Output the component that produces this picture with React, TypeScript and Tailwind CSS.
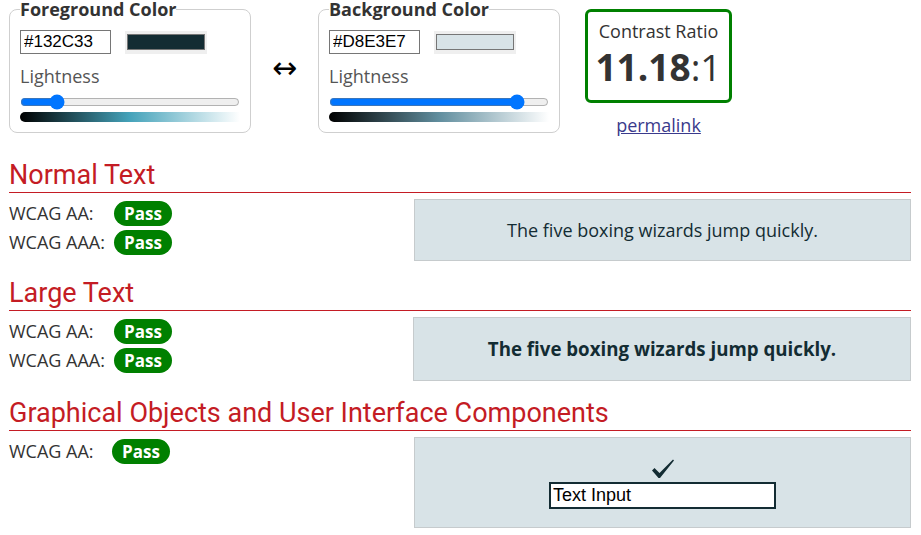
const body = "font-['Open_Sans',sans-serif]"

function Swatch({ color }: { color: string }) {
  return (
    <div className="w-[82px] h-[23px] bg-[#efefef] flex items-center justify-center">
      <div className="w-[78px] h-[16px] border border-[#767676]" style={{ background: color }} />
    </div>
  )
}

function ColorPicker({
  title,
  hex,
  value,
  gradient,
}: {
  title: string
  hex: string
  value: number
  gradient: string
}) {
  return (
    <fieldset className="w-[242px] border border-[#cfcfcf] rounded-[8px] px-[10px] pt-[12px] pb-[10px]">
      <legend className="text-[18px] font-bold text-[#333] leading-[18px] p-0">{title}</legend>
      <div className="flex items-center gap-[14px]">
        <input
          readOnly
          value={hex}
          className="w-[91px] h-[24px] border border-[#767676] px-[3px] text-[17px] text-black font-['Liberation_Sans',Arial,sans-serif] leading-none outline-none"
        />
        <Swatch color={hex} />
      </div>
      <div className="text-[18px] text-[#555] mt-[10px] leading-[24px]">Lightness</div>
      <input
        type="range"
        min={0}
        max={100}
        defaultValue={value}
        className="block w-[220px] h-[16px] mt-[6px] m-0 accent-[#0075ff]"
      />
      <div className="w-[220px] h-[10px] mt-[2px] rounded-l-[5px]" style={{ background: gradient }} />
    </fieldset>
  )
}

function Pass() {
  return (
    <span className="inline-flex items-center justify-center w-[58px] h-[25px] rounded-full bg-[#008000] text-white font-bold text-[17px] leading-none">
      Pass
    </span>
  )
}

function Heading({ children }: { children: string }) {
  return (
    <h2 className="h-[33px] flex items-end pb-[1px] border-b border-solid border-b-[#c41c24] text-[27px] leading-[32px] text-[#c41c24] font-['Roboto',sans-serif]">
      {children}
    </h2>
  )
}

function Row({ label, w }: { label: string; w: string }) {
  return (
    <div className="flex items-center h-[29px]">
      <span className={`${w} text-[18px] text-[#333]`}>{label}</span>
      <Pass />
    </div>
  )
}

function Check() {
  return (
    <svg width="24" height="22" viewBox="0 0 24 22" className="block">
      <path d="M1 12.5 L3.5 10 L8.5 15 L22 1.5 L23 2.5 L9 20 L7.5 20 Z" fill="#132C33" />
    </svg>
  )
}

export default function App() {
  return (
    <div className={`${body} w-[921px] h-[535px] bg-white pl-[9px] pr-[10px] text-[#333] overflow-hidden`}>
      <div className="flex items-start h-[160px]">
        <ColorPicker
          title="Foreground Color"
          hex="#132C33"
          value={14}
          gradient="linear-gradient(to right, hsl(192 46% 0%), hsl(192 46% 25%), hsl(192 46% 50%), hsl(192 46% 75%), hsl(192 46% 100%))"
        />
        <div className="w-[67px] h-[124px] flex items-center justify-center text-[30px] text-black pt-[10px] font-['DejaVu_Sans',sans-serif]">
          ↔
        </div>
        <ColorPicker
          title="Background Color"
          hex="#D8E3E7"
          value={88}
          gradient="linear-gradient(to right, hsl(196 24% 0%), hsl(196 24% 25%), hsl(196 24% 50%), hsl(196 24% 75%), hsl(196 24% 100%))"
        />
        <div className="ml-[25px] mt-[9px] flex flex-col items-center">
          <div className="w-[147px] h-[94px] border-[3px] border-[#008000] rounded-[6px] flex flex-col items-center pt-[7px]">
            <div className="text-[18px] leading-[24px] text-[#333]">Contrast Ratio</div>
            <div className="text-[37px] leading-[44px] text-[#333] mt-[2px]">
              <span className="font-bold">11.18</span>:1
            </div>
          </div>
          <a className="mt-[10px] text-[18px] leading-[24px] text-[#3a3a8c] underline">permalink</a>
        </div>
      </div>

      <div>
        <Heading>Normal Text</Heading>
        <div className="flex mt-[6px]">
          <div className="w-[405px]">
            <Row label="WCAG AA:" w="w-[105px]" />
            <Row label="WCAG AAA:" w="w-[105px]" />
          </div>
          <div className="flex-1 h-[62px] bg-[#D8E3E7] border border-[#c6cbcd] flex items-center justify-center text-[18px] text-[#132C33]">
            The five boxing wizards jump quickly.
          </div>
        </div>
      </div>

      <div className="mt-[17px]">
        <Heading>Large Text</Heading>
        <div className="flex mt-[6px]">
          <div className="w-[404px]">
            <Row label="WCAG AA:" w="w-[105px]" />
            <Row label="WCAG AAA:" w="w-[105px]" />
          </div>
          <div className="flex-1 h-[64px] bg-[#D8E3E7] border border-[#c6cbcd] flex items-center justify-center text-[18.7px] font-bold text-[#132C33]">
            The five boxing wizards jump quickly.
          </div>
        </div>
      </div>

      <div className="mt-[17px]">
        <Heading>Graphical Objects and User Interface Components</Heading>
        <div className="flex mt-[6px]">
          <div className="w-[405px]">
            <Row label="WCAG AA:" w="w-[103px]" />
          </div>
          <div className="flex-1 h-[91px] bg-[#D8E3E7] border border-[#c6cbcd] flex flex-col items-center justify-center pt-[2px]">
            <Check />
            <input
              readOnly
              value="Text Input"
              className="mt-[2px] w-[227px] h-[27px] bg-white border-2 border-[#132C33] px-[2px] text-[18px] text-black font-['Liberation_Sans',Arial,sans-serif] outline-none"
            />
          </div>
        </div>
      </div>
    </div>
  )
}
